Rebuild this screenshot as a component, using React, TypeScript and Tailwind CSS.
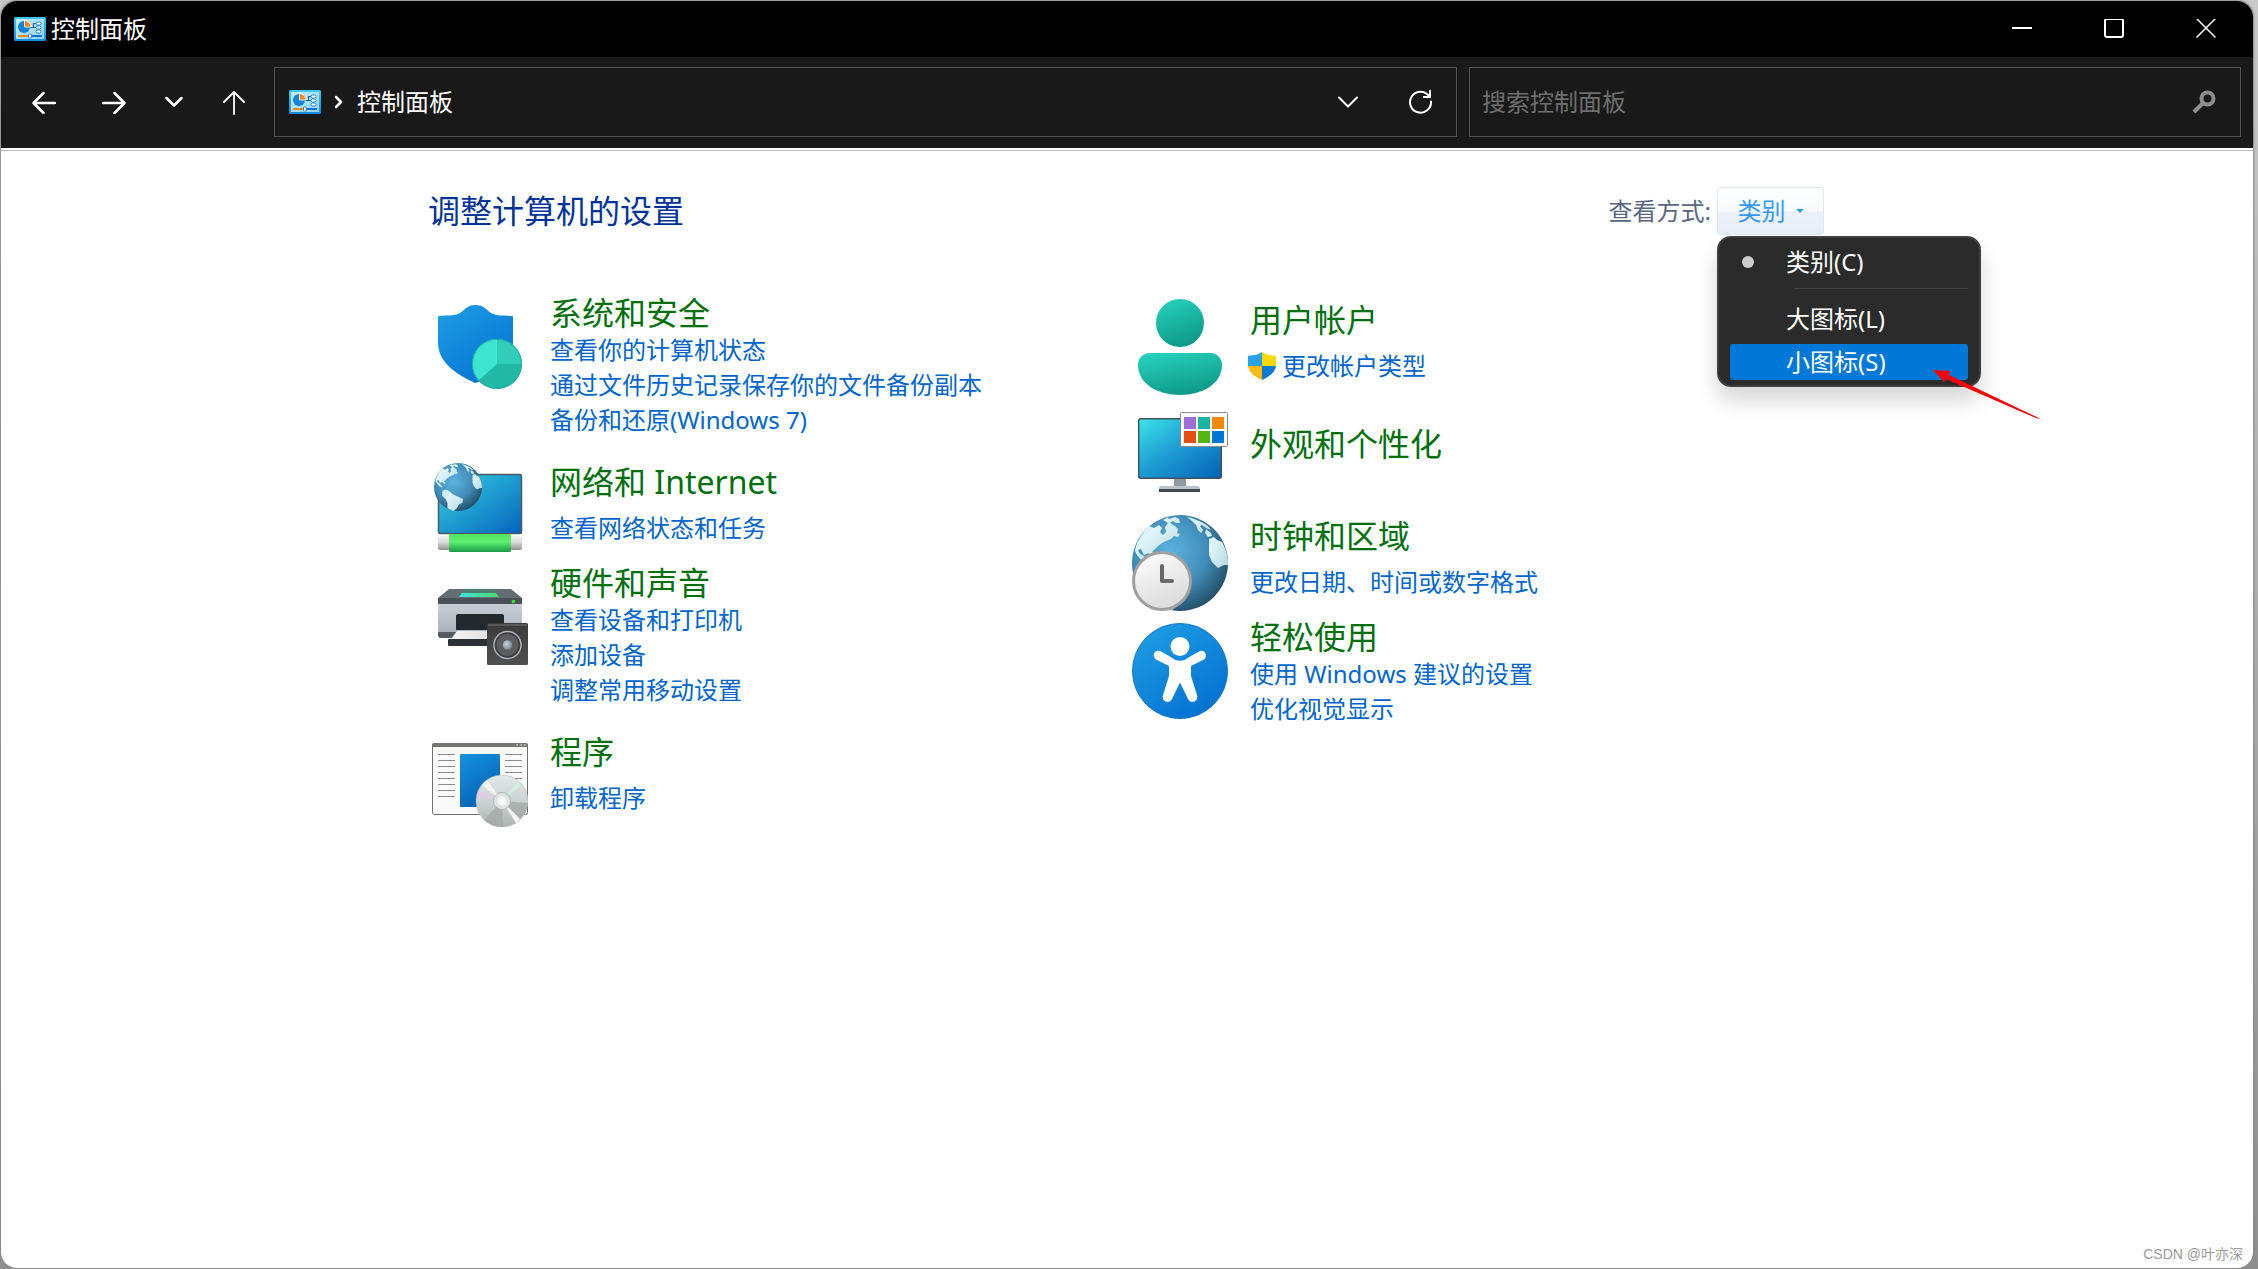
import { useState } from "react";
import type { ReactNode } from "react";

type Category = {
  title: string;
  icon: ReactNode;
  links: string[];
  shield?: boolean;
};

const VIEW_OPTIONS = [
  { id: "category", label: "类别(C)" },
  { id: "large", label: "大图标(L)" },
  { id: "small", label: "小图标(S)" },
];

function PanelIcon() {
  return (
    <svg width="32" height="24" viewBox="0 0 32 24" aria-hidden="true">
      <defs>
        <linearGradient id="panelFrame" x1="0" y1="0" x2="0" y2="1">
          <stop offset="0" stopColor="#3ccbf4" />
          <stop offset="1" stopColor="#148be0" />
        </linearGradient>
        <linearGradient id="panelFace" x1="0" y1="0" x2="1" y2="1">
          <stop offset="0" stopColor="#c4ecfb" />
          <stop offset="1" stopColor="#8fd4f5" />
        </linearGradient>
      </defs>
      <rect width="32" height="24" rx="1.5" fill="url(#panelFrame)" />
      <rect x="2" y="2" width="28" height="20" fill="url(#panelFace)" />
      <circle cx="10" cy="10" r="6" fill="#1583d8" />
      <path d="M10.500 3.500V10H17A6.500 6.500 0 0 0 10.500 3.500Z" fill="#f7890b" stroke="#fff" strokeWidth="0.800" />
      <path d="M16.500 10.500H19.500V6.500H23M19.500 10.500H23" fill="none" stroke="#1667b5" strokeWidth="1.200" />
      <rect x="22" y="5" width="5" height="3" rx="1.500" fill="#fff" stroke="#1d7fd0" />
      <rect x="22" y="9" width="5" height="3" rx="1.500" fill="#fff" stroke="#1d7fd0" />
      <rect x="22" y="13" width="5" height="3" rx="1.500" fill="#fff" stroke="#1d7fd0" />
      <rect x="4" y="18" width="12" height="2" fill="#f7890b" />
      <rect x="16" y="18" width="12" height="2" fill="#0f74cf" />
      <rect x="14.500" y="17" width="3" height="4" rx="1" fill="#fff" stroke="#1667b5" strokeWidth="0.800" />
    </svg>
  );
}

function SecurityIcon() {
  return (
    <svg width="96" height="96" viewBox="0 0 96 96" aria-hidden="true">
      <defs>
        <linearGradient id="secShield" x1="0" y1="0" x2="0.700" y2="1">
          <stop offset="0" stopColor="#1e9fe3" />
          <stop offset="1" stopColor="#0673d4" />
        </linearGradient>
      </defs>
      <path
        d="M43.500 6C52 6 54 11 60 14.500C66 17.500 73 16 80 17C81 17 81 18 81 19V43C81 60 68 73 45 83.500C43.500 84 42.500 84 41 83C18 72 6 60 6 43V19C6 18 6 17 7 17C14 16 21 17.500 27 14.500C33 11 35 6 43.500 6Z"
        fill="url(#secShield)"
      />
      <circle cx="65" cy="65" r="25" fill="#22b8a6" />
      <path d="M65 65V40A25 25 0 0 1 90 65Z" fill="#30cdb9" />
      <path d="M65 65V40A25 25 0 0 0 46.500 81.500Z" fill="#3de4cf" />
      <circle cx="65" cy="65" r="24.500" fill="none" stroke="#1ba796" strokeOpacity="0.700" />
    </svg>
  );
}

function Globe({ id }: { id: string }) {
  return (
    <g>
      <defs>
        <radialGradient id={id} cx="0.400" cy="0.380" r="0.680">
          <stop offset="0" stopColor="#5cb2e0" />
          <stop offset="0.550" stopColor="#428eba" />
          <stop offset="1" stopColor="#204a60" />
        </radialGradient>
        <linearGradient id={id + "Land"} x1="0" y1="0" x2="1" y2="1">
          <stop offset="0" stopColor="#bfe3ee" />
          <stop offset="0.350" stopColor="#dff5fa" />
          <stop offset="1" stopColor="#b5d8e2" />
        </linearGradient>
      </defs>
      <circle cx="48" cy="48" r="48" fill={`url(#${id})`} />
      <path
        d="M48 0C44 0 39 1 35 2L37 4L43 2L47 4L48 8L44 8L41 6L38 8L43 11L46 14L45 18L48 19L46 22L42 21L39 24L34 26L30 28L26 31L23 34L20 37L23 40L21 42L16 38L12 40L9 34L6 35L8 39L12 41L13 44L17 47L16 49L10 46L5 40L3 36C4 28 9 19 17 11L22 13L27 10L30 13L28 17L31 20L34 17L33 12L36 8L31 5L38 1Z"
        fill={`url(#${id}Land)`}
      />
      <path
        d="M55 2C62 3 70 7 76 11L79 15L74 13L70 10L68 11L71 15L69 18L66 15L64 10L60 6Z"
        fill={`url(#${id}Land)`}
      />
      <path
        d="M74 14L79 18L80 21L76 22L73 18ZM77 24L82 22L85 25L90 27C94 34 96 41 96 50L92 50L86 53L80 47L77 40L77 32Z"
        fill={`url(#${id}Land)`}
      />
      <path
        d="M17 55L24 53L32 57L37 62L45 66L58 72L57 79L50 83L46 90L39 96C34 94 29 92 27 90L27 80L23 72L16 65Z"
        fill={`url(#${id}Land)`}
      />
    </g>
  );
}

function NetworkIcon() {
  return (
    <svg width="96" height="96" viewBox="0 0 96 96" aria-hidden="true">
      <defs>
        <linearGradient id="netScreen" x1="0" y1="0" x2="1" y2="1">
          <stop offset="0" stopColor="#35d3e2" />
          <stop offset="1" stopColor="#0663bd" />
        </linearGradient>
        <linearGradient id="netPlug" x1="0" y1="0" x2="0" y2="1">
          <stop offset="0" stopColor="#f0f0f0" />
          <stop offset="0.450" stopColor="#dadada" />
          <stop offset="1" stopColor="#929292" />
        </linearGradient>
        <linearGradient id="netCable" x1="0" y1="0" x2="0" y2="1">
          <stop offset="0" stopColor="#52e260" />
          <stop offset="0.450" stopColor="#5df06c" />
          <stop offset="1" stopColor="#1b9a4b" />
        </linearGradient>
      </defs>
      <rect x="6.500" y="13.500" width="83" height="59" rx="1.500" fill="url(#netScreen)" stroke="#4d5a63" strokeWidth="1.500" />
      <rect x="6" y="75" width="84" height="14" rx="2" fill="url(#netPlug)" />
      <rect x="17" y="73" width="62" height="18" rx="1.500" fill="url(#netCable)" />
      <svg x="2" y="2" width="48" height="48" viewBox="0 0 96 96">
        <Globe id="netGlobe" />
      </svg>
    </svg>
  );
}

function HardwareIcon() {
  return (
    <svg width="96" height="96" viewBox="0 -9 96 96" aria-hidden="true">
      <defs>
        <linearGradient id="hwBody" x1="0" y1="0" x2="0" y2="1">
          <stop offset="0" stopColor="#ccd3da" />
          <stop offset="1" stopColor="#a3acb6" />
        </linearGradient>
        <linearGradient id="hwGlass" x1="0" y1="0" x2="1" y2="0">
          <stop offset="0" stopColor="#43e2e5" />
          <stop offset="1" stopColor="#4bd964" />
        </linearGradient>
        <linearGradient id="hwPaper" x1="0" y1="0" x2="1" y2="0">
          <stop offset="0" stopColor="#f5f5f5" />
          <stop offset="1" stopColor="#d8d8d8" />
        </linearGradient>
        <linearGradient id="hwBox" x1="0" y1="0" x2="0" y2="1">
          <stop offset="0" stopColor="#3b3b3b" />
          <stop offset="1" stopColor="#505050" />
        </linearGradient>
        <radialGradient id="hwCone" cx="0.400" cy="0.400" r="0.600">
          <stop offset="0" stopColor="#c9d3da" />
          <stop offset="1" stopColor="#79858e" />
        </radialGradient>
      </defs>
      <path d="M6 22H90V58L86 60H10L6 57Z" fill="url(#hwBody)" />
      <path d="M17 11H79L90 20V26H6V20Z" fill="#656d72" />
      <path d="M6 20H90V24Q90 26 88 26H8Q6 26 6 24Z" fill="#4b5257" />
      <path d="M31 11H62L67 19H26Z" fill="#4c7d70" />
      <path d="M30 15H64L67 19H27Z" fill="url(#hwGlass)" />
      <circle cx="81.500" cy="23.500" r="1.800" fill="#36ee2c" />
      <path d="M24 52V38Q24 36 26 36H70Q72 36 72 38V52Z" fill="#24292d" />
      <path d="M6 54H24V60H9Q6 60 6 57Z" fill="#545c61" />
      <path d="M25 53H72V61H19Z" fill="url(#hwPaper)" />
      <rect x="16" y="61" width="58" height="7" rx="1" fill="#2b3034" />
      <rect x="55" y="45" width="41" height="42" rx="1.500" fill="url(#hwBox)" />
      <rect x="56" y="46" width="39" height="2" fill="#59595a" />
      <circle cx="75.500" cy="67" r="13.500" fill="#3d3d3e" stroke="#aab2bc" strokeWidth="1.500" />
      <circle cx="75.500" cy="67" r="11" fill="#5d5d5e" />
      <circle cx="75.500" cy="67" r="4.800" fill="url(#hwCone)" />
    </svg>
  );
}

function ProgramsIcon() {
  const rows = [12, 18, 24, 30, 36, 42, 48, 54];
  return (
    <svg width="96" height="96" viewBox="0 0 96 96" aria-hidden="true">
      <defs>
        <linearGradient id="progPage" x1="0" y1="0" x2="0.500" y2="1">
          <stop offset="0" stopColor="#1593de" />
          <stop offset="1" stopColor="#0663b5" />
        </linearGradient>
        <linearGradient id="progDisc" x1="0" y1="0" x2="0" y2="1">
          <stop offset="0" stopColor="#e2e8e7" />
          <stop offset="0.500" stopColor="#cdd3d2" />
          <stop offset="1" stopColor="#aeb4b3" />
        </linearGradient>
      </defs>
      <rect x="0.500" y="12.500" width="95" height="71" rx="2" fill="#fafafa" stroke="#70706c" />
      <path d="M0 16V14Q0 12 2 12H94Q96 12 96 14V16Z" fill="#757571" />
      <path d="M84.500 14H86M88.500 14H90M92 14H93.500" stroke="#fff" strokeWidth="1.200" />
      {rows.map((y) => (
        <path key={y} d={`M6 ${y + 11.5}H23M73 ${y + 11.5}H90`} stroke="#8b8b8b" />
      ))}
      <rect x="28" y="23" width="40" height="53" rx="1" fill="url(#progPage)" />
      <circle cx="70" cy="70" r="26" fill="url(#progDisc)" stroke="#b5b9b8" strokeWidth="0.500" />
      <path d="M70 70L52 89A26 26 0 0 0 71 96Z" fill="#9ea3a2" fillOpacity="0.600" />
      <path d="M70 70L96 72A26 26 0 0 1 88 88Z" fill="#a1a5a4" fillOpacity="0.700" />
      <path d="M70 70L88 88L84 92Z" fill="#f4f4f4" />
      <path d="M70 70L50 54L55 49Z" fill="#fff" fillOpacity="0.700" />
      <path d="M70 70L45 64L46 60Z" fill="#ecc6ec" />
      <path d="M70 70L86 51L89 54Z" fill="#c9f0d8" />
      <circle cx="70" cy="70" r="8.500" fill="#dce3e2" stroke="#a9b0af" strokeWidth="0.800" />
      <circle cx="70" cy="70" r="5" fill="#eef2f1" />
      <circle cx="70" cy="70" r="2.500" fill="#fff" />
    </svg>
  );
}

function AccountIcon() {
  return (
    <svg width="96" height="96" viewBox="0 0 96 96" aria-hidden="true">
      <defs>
        <linearGradient id="accFill" x1="0.200" y1="0" x2="0.600" y2="1">
          <stop offset="0" stopColor="#26d0bb" />
          <stop offset="1" stopColor="#0d9986" />
        </linearGradient>
      </defs>
      <circle cx="48" cy="24" r="24" fill="url(#accFill)" />
      <path d="M18 54H78C85 54 90 59 90 66C90 85 70 96 48 96C26 96 6 85 6 66C6 59 11 54 18 54Z" fill="url(#accFill)" />
    </svg>
  );
}

function AppearanceIcon() {
  const swatches = ["#9b6fd6", "#1ab5a2", "#f38a0c", "#e34f13", "#57b40e", "#0078d7"];
  return (
    <svg width="96" height="96" viewBox="0 0 96 96" aria-hidden="true">
      <defs>
        <linearGradient id="appScreen" x1="0" y1="0" x2="1" y2="1">
          <stop offset="0" stopColor="#3de4ea" />
          <stop offset="0.450" stopColor="#1f9fd3" />
          <stop offset="1" stopColor="#0462b8" />
        </linearGradient>
      </defs>
      <rect x="42" y="71" width="12" height="11" fill="#8e99a1" />
      <path d="M29 79H65Q68 79 68 82V83H27V82Q27 79 29 79Z" fill="#b7c1c9" />
      <rect x="27" y="82" width="41" height="3" fill="#45494c" />
      <rect x="6.700" y="11.700" width="82.600" height="59.600" rx="2" fill="url(#appScreen)" stroke="#46525b" strokeWidth="1.500" />
      <rect x="48.500" y="5.500" width="47" height="34" rx="1" fill="#f8f8f8" stroke="#8c8c8c" />
      {swatches.map((c, i) => (
        <rect key={c} x={52 + (i % 3) * 14} y={10 + Math.floor(i / 3) * 14} width="12" height="12" fill={c} />
      ))}
    </svg>
  );
}

function ClockIcon() {
  return (
    <svg width="96" height="96" viewBox="0 0 96 96" aria-hidden="true">
      <defs>
        <linearGradient id="clockFace" x1="0" y1="0" x2="0.400" y2="1">
          <stop offset="0" stopColor="#ffffff" />
          <stop offset="1" stopColor="#dcdcdc" />
        </linearGradient>
      </defs>
      <Globe id="clockGlobe" />
      <circle cx="30" cy="66" r="28.500" fill="url(#clockFace)" stroke="#a0a0a0" strokeWidth="3" />
      <path d="M30 51V66H40" fill="none" stroke="#6a6a6a" strokeWidth="4" strokeLinecap="round" strokeLinejoin="round" />
    </svg>
  );
}

function AccessIcon() {
  return (
    <svg width="96" height="96" viewBox="0 0 96 96" aria-hidden="true">
      <defs>
        <linearGradient id="accessFill" x1="0.100" y1="0" x2="0.800" y2="1">
          <stop offset="0" stopColor="#1f9fe2" />
          <stop offset="1" stopColor="#046fd2" />
        </linearGradient>
      </defs>
      <circle cx="48" cy="48" r="47.500" fill="url(#accessFill)" stroke="#1479c9" />
      <circle cx="48" cy="23.500" r="9.500" fill="#fff" />
      <path
        d="M28 28L38 33.500Q48 42 58 33.500L68 28C73 26 77 34 71 37L59 43V53L65 72C67 78 59 82 56 76L48 59.500L40 76C37 82 29 78 31 72L37 53V43L25 37C19 34 22 26 28 28Z"
        fill="#fff"
      />
    </svg>
  );
}

function UacShield() {
  return (
    <svg width="28" height="28" viewBox="0 0 28 28" aria-hidden="true">
      <path d="M14 0C11 2.500 6 3.500 1 3.500Q0 3.500 0 5V14H14Z" fill="#2aa3e4" />
      <path d="M14 0C17 2.500 22 3.500 27 3.500Q28 3.500 28 5V14H14Z" fill="#fed800" />
      <path d="M0 14H14V28C8 25.500 1 21 0 14Z" fill="#fbba0d" />
      <path d="M28 14H14V28C20 25.500 27 21 28 14Z" fill="#0f78d0" />
    </svg>
  );
}

const LEFT: Category[] = [
  {
    title: "系统和安全",
    icon: <SecurityIcon />,
    links: ["查看你的计算机状态", "通过文件历史记录保存你的文件备份副本", "备份和还原(Windows 7)"],
  },
  { title: "网络和 Internet", icon: <NetworkIcon />, links: ["查看网络状态和任务"] },
  { title: "硬件和声音", icon: <HardwareIcon />, links: ["查看设备和打印机", "添加设备", "调整常用移动设置"] },
  { title: "程序", icon: <ProgramsIcon />, links: ["卸载程序"] },
];

const RIGHT: Category[] = [
  { title: "用户帐户", icon: <AccountIcon />, links: ["更改帐户类型"], shield: true },
  { title: "外观和个性化", icon: <AppearanceIcon />, links: [] },
  { title: "时钟和区域", icon: <ClockIcon />, links: ["更改日期、时间或数字格式"] },
  { title: "轻松使用", icon: <AccessIcon />, links: ["使用 Windows 建议的设置", "优化视觉显示"] },
];

function CategoryItem({ item }: { item: Category }) {
  const single = item.links.length === 1;
  const empty = item.links.length === 0;

  return (
    <li className={`flex gap-[22px] ${item.links.length > 2 ? "h-[150px]" : "h-24"}`}>
      <a href="#" tabIndex={-1} aria-hidden="true" className="h-24 w-24 shrink-0">
        {item.icon}
      </a>
      <div className={`whitespace-nowrap ${empty ? "pt-[23px]" : single ? "pt-[7px]" : ""}`}>
        <h2 className={`text-[32px] leading-7 text-[#00700d] ${single ? "mb-[14px]" : "mb-[5px]"}`}>
          <a href="#">{item.title}</a>
        </h2>
        <ul>
          {item.links.map((l) => (
            <li key={l} className="text-2xl leading-[35px]">
              <a
                href="#"
                className={`inline-flex items-center gap-1.5 text-[#0066cc] ${item.shield ? "-ml-0.5" : ""}`}
              >
                {item.shield && <UacShield />}
                {l}
              </a>
            </li>
          ))}
        </ul>
      </div>
    </li>
  );
}

export default function App() {
  const [open, setOpen] = useState(true);
  const [view, setView] = useState("category");
  const [active, setActive] = useState("small");
  const [query, setQuery] = useState("");

  return (
    <div className="min-h-screen bg-gradient-to-b from-[#c9c9c9] to-[#8e8e8e] pt-px pr-[5px] pb-px pl-px font-['Noto_Sans','Noto_Sans_CJK_SC',sans-serif] text-2xl">
      <div className="relative flex min-h-[calc(100vh-2px)] flex-col overflow-hidden rounded-2xl bg-white shadow-[0_0_2px_1px_#8a8a8a]">
        <header className="flex h-14 items-center bg-black pr-px text-white">
          <div className="flex flex-1 items-center gap-[5px] pl-[13px]">
            <PanelIcon />
            <h1 className="leading-8">控制面板</h1>
          </div>
          <button type="button" aria-label="最小化" className="flex h-14 w-[92px] items-center justify-center">
            <svg width="20" height="20" viewBox="0 0 20 20" fill="none" stroke="currentColor" strokeWidth="2">
              <path d="M0 9H20" />
            </svg>
          </button>
          <button type="button" aria-label="最大化" className="flex h-14 w-[92px] items-center justify-center">
            <svg width="20" height="20" viewBox="0 0 20 20" fill="none" stroke="currentColor" strokeWidth="2">
              <rect x="1" y="0" width="18" height="18" rx="2" />
            </svg>
          </button>
          <button type="button" aria-label="关闭" className="flex h-14 w-[92px] items-center justify-center">
            <svg width="20" height="20" viewBox="0 1 20 20" fill="none" stroke="currentColor" strokeWidth="1.500">
              <path d="M0.500 0.500L19.500 19.500M19.500 0.500L0.500 19.500" />
            </svg>
          </button>
        </header>

        <nav className="flex items-center bg-[#191919] px-2 pt-[10px] pb-[11px] text-white">
          <button type="button" aria-label="后退" className="flex h-[70px] w-[70px] items-center justify-center">
            <svg width="24" height="24" viewBox="0 0 24 24" fill="none" stroke="currentColor" strokeWidth="2.500" strokeLinecap="round" strokeLinejoin="round">
              <path d="M23 13H2M11.500 3L1.500 13L11.500 23" />
            </svg>
          </button>
          <button type="button" aria-label="前进" className="flex h-[70px] w-[70px] items-center justify-center">
            <svg width="24" height="24" viewBox="0 0 24 24" fill="none" stroke="currentColor" strokeWidth="2.500" strokeLinecap="round" strokeLinejoin="round">
              <path d="M1 13H22M12.500 3L22.500 13L12.500 23" />
            </svg>
          </button>
          <button type="button" aria-label="最近浏览的位置" className="flex h-[70px] w-[50px] items-center justify-center">
            <svg width="18" height="12" viewBox="0 0 18 12" fill="none" stroke="currentColor" strokeWidth="2.500" strokeLinecap="round" strokeLinejoin="round">
              <path d="M1.500 2L9 9.500L16.500 2" />
            </svg>
          </button>
          <button type="button" aria-label="上一级" className="flex h-[70px] w-[70px] items-center justify-center">
            <svg width="22" height="26" viewBox="0 0 22 26" fill="none" stroke="currentColor" strokeWidth="1.800" strokeLinecap="round" strokeLinejoin="round">
              <path d="M11 25V3M1 13L11 3L21 13" />
            </svg>
          </button>

          <div className="ml-[5px] flex h-[70px] min-w-0 flex-1 items-center border border-[#535353] pl-[14px]">
            <PanelIcon />
            <svg className="mx-[13px] shrink-0" width="10" height="14" viewBox="0 0 10 14" fill="none" stroke="currentColor" strokeWidth="2.500" strokeLinecap="round" strokeLinejoin="round">
              <path d="M2 2L7 7L2 12" />
            </svg>
            <a href="#" className="flex-1 leading-8">
              控制面板
            </a>
            <button type="button" aria-label="以前的位置" className="flex h-full w-[72px] items-center justify-center">
              <svg width="20" height="12" viewBox="0 0 20 12" fill="none" stroke="currentColor" strokeWidth="2" strokeLinecap="round" strokeLinejoin="round">
                <path d="M1 1.500L10 10.500L19 1.500" />
              </svg>
            </button>
            <button type="button" aria-label="刷新" className="flex h-full w-[72px] items-center justify-center">
              <svg width="24" height="24" viewBox="0 0 24 24" fill="none" stroke="currentColor" strokeWidth="2">
                <path d="M21 6A10.500 10.500 0 1 0 23 11.500" strokeLinecap="round" />
                <path d="M22 0V7H15" />
              </svg>
            </button>
          </div>

          <div className="mr-1 ml-3 flex h-[70px] w-[772px] items-center border border-[#535353] pr-6 pl-3">
            <input
              type="text"
              aria-label="搜索控制面板"
              value={query}
              onChange={(e) => setQuery(e.target.value)}
              placeholder="搜索控制面板"
              className="min-w-0 flex-1 bg-transparent leading-8 text-white outline-none placeholder:text-[#6e6e6e]"
            />
            <svg width="24" height="24" viewBox="0 0 24 24" fill="none" stroke="#8f8f8f" aria-hidden="true">
              <circle cx="15.500" cy="8.500" r="6" strokeWidth="4" />
              <path d="M11 13L2 22" strokeWidth="4" />
            </svg>
          </div>
        </nav>

        <main className="mt-0.5 flex-1 border-t border-[#bababa] pt-9 pr-6 pl-[26px]">
          <div className="mx-auto max-w-[1392px]">
            <div className="flex h-12 items-center justify-between">
              <p className="-ml-1 text-[32px] leading-10 text-[#003399]">调整计算机的设置</p>
              <div className="flex items-center gap-1.5 text-[#596680]">
                <span id="view-label">查看方式:</span>
                <div className="relative">
                  <button
                    type="button"
                    aria-haspopup="menu"
                    aria-expanded={open}
                    aria-labelledby="view-label"
                    onClick={() => setOpen(!open)}
                    className="flex h-12 w-[107px] items-center justify-center gap-[10px] rounded-[3px] border border-[#e1e7f0] bg-[linear-gradient(#ffffff_0%,#f8fafd_50%,#edf1f9_52%,#e8eef7_100%)] text-[#3399ff]"
                  >
                    类别
                    <svg width="8" height="4" viewBox="0 0 8 4" fill="currentColor">
                      <path d="M0 0H8L4 4Z" />
                    </svg>
                  </button>

                  {open && (
                    <div
                      role="menu"
                      className="absolute top-[49px] left-0 z-10 h-[151px] w-[264px] rounded-[14px] border-2 border-[#3f3f3f] bg-[#2b2b2b] px-[11px] pt-1.5 text-white shadow-[0_14px_22px_rgba(0,0,0,0.16)]"
                    >
                      {VIEW_OPTIONS.map((o, i) => (
                        <div key={o.id}>
                          <button
                            type="button"
                            role="menuitemradio"
                            aria-checked={view === o.id}
                            onMouseEnter={() => setActive(o.id)}
                            onClick={() => {
                              setView(o.id);
                              setOpen(false);
                            }}
                            className={`flex h-9 w-full items-center rounded-[3px] pl-3 whitespace-nowrap ${
                              active === o.id ? "bg-[#0078d7]" : ""
                            } ${i === 1 ? "mb-[7px]" : ""}`}
                          >
                            <span className="w-11">
                              {view === o.id && <span className="block h-3 w-3 rounded-full bg-[#cccccc]" />}
                            </span>
                            {o.label}
                          </button>
                          {i === 0 && <hr className="mt-2 mb-3 ml-[64px] border-[#404040]" />}
                        </div>
                      ))}
                    </div>
                  )}

                  {open && (
                    <svg
                      className="pointer-events-none absolute top-[183px] left-[216px] z-20"
                      width="108"
                      height="50"
                      viewBox="0 0 108 50"
                      aria-hidden="true"
                    >
                      <path d="M0 0L17 1L16 5L108 49L103 48L13 9L11 12Z" fill="#ff0000" />
                    </svg>
                  )}
                </div>
              </div>
            </div>

            <div className="mt-16 grid grid-cols-2 gap-x-2">
              <ul className="flex flex-col gap-3">
                {LEFT.map((c) => (
                  <CategoryItem key={c.title} item={c} />
                ))}
              </ul>
              <ul className="flex flex-col gap-3">
                {RIGHT.map((c) => (
                  <CategoryItem key={c.title} item={c} />
                ))}
              </ul>
            </div>
          </div>
        </main>

        <footer className="flex justify-end px-[10px] pb-1 text-sm leading-5 text-[#999999]">
          <span className="font-['Liberation_Sans','Noto_Sans_CJK_SC',sans-serif]">CSDN @叶亦深</span>
        </footer>
      </div>
    </div>
  );
}
